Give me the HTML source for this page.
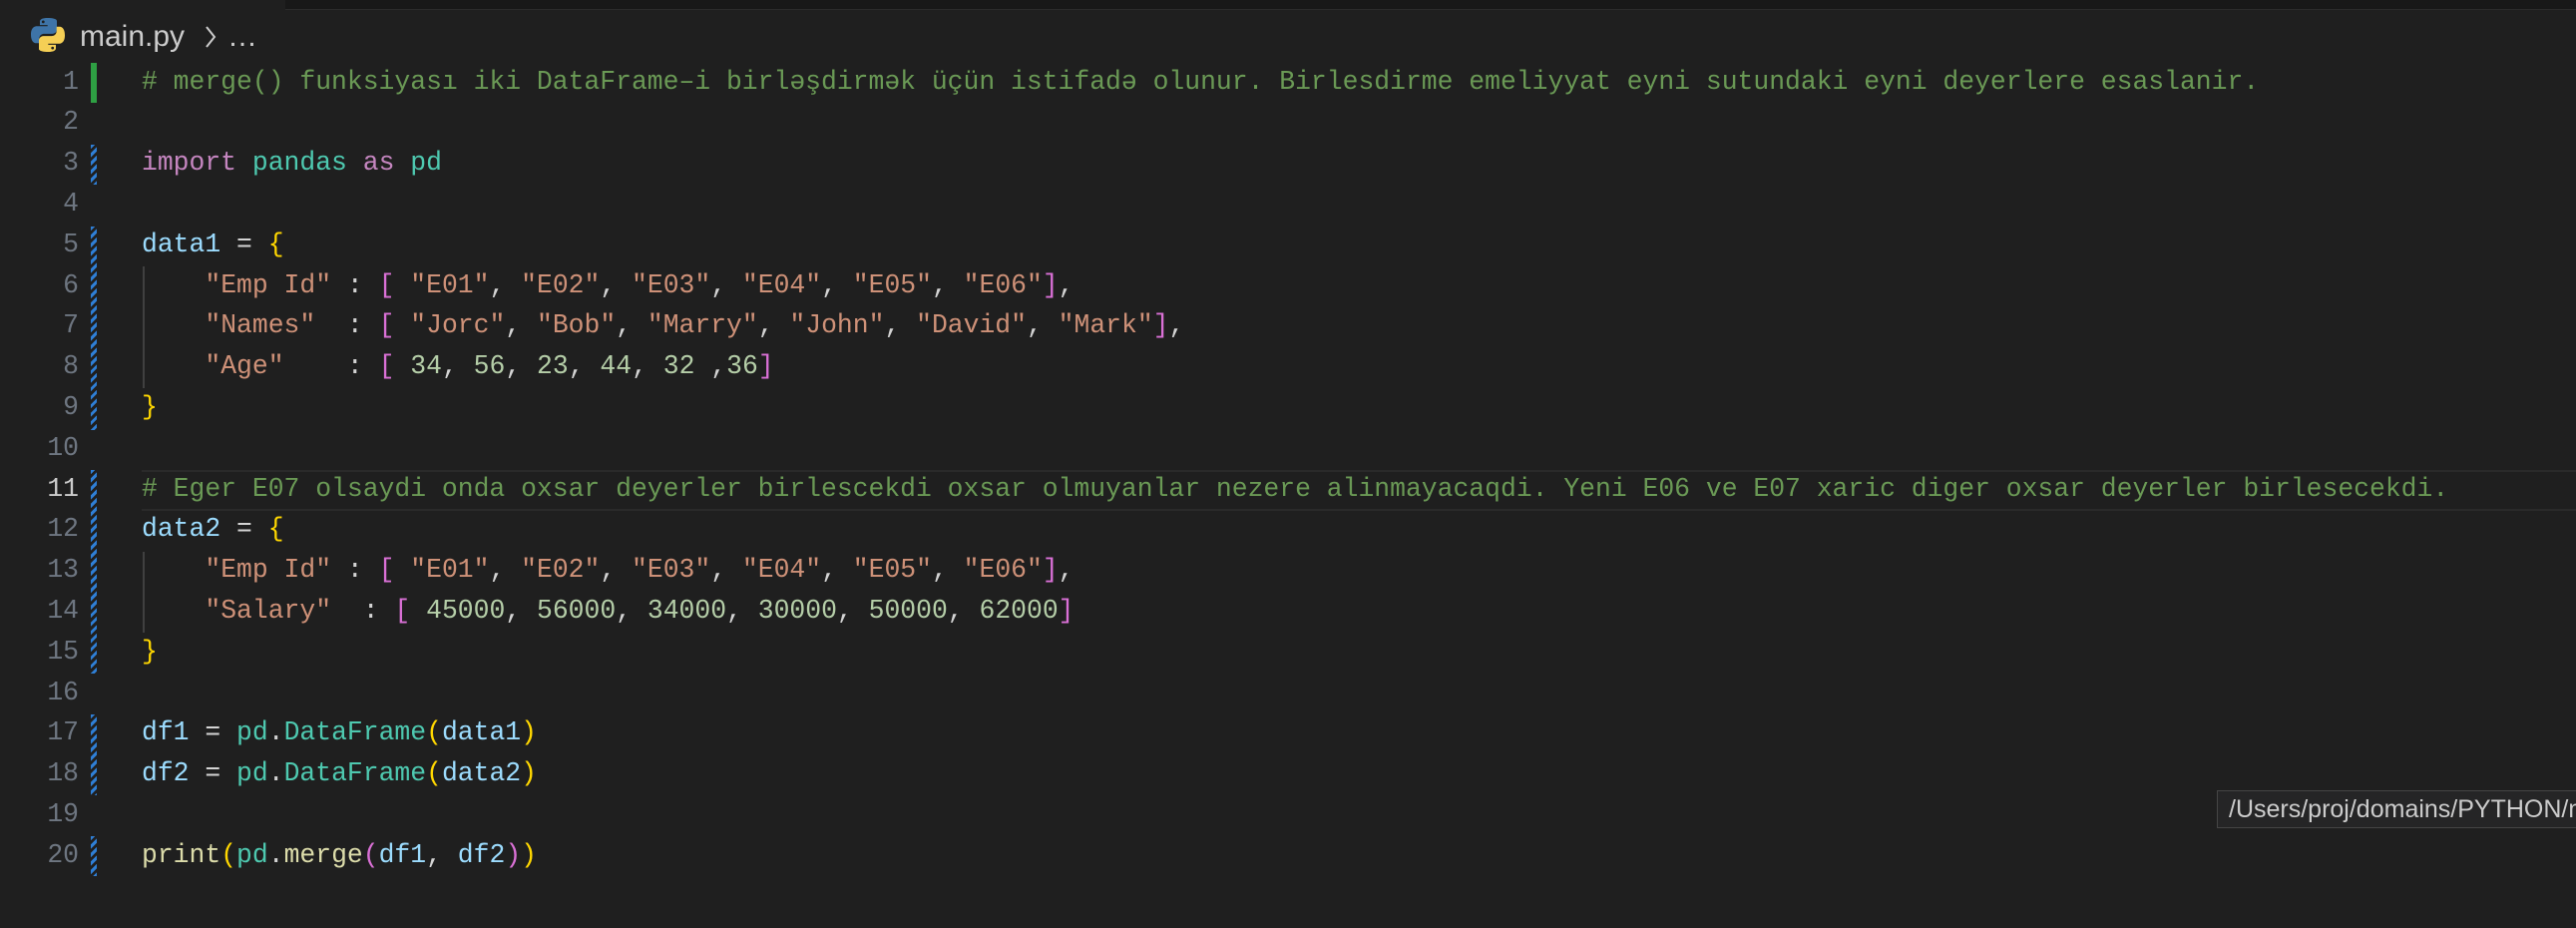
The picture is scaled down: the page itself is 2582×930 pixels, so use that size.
<!DOCTYPE html>
<html><head><meta charset="utf-8"><style>
html,body{margin:0;padding:0;width:2582px;height:930px;background:#1f1f1f;overflow:hidden}
.top{position:absolute;left:286px;top:0;width:2296px;height:9px;background:#181818;border-bottom:1px solid #2b2b2b}
.bc{position:absolute;left:80px;top:16px;font:30px "Liberation Sans",sans-serif;color:#cccccc;line-height:42px}
.ln{position:absolute;left:0;width:79px;text-align:right;font:26.4px "Liberation Mono",monospace;color:#6e7681;line-height:40.8px;height:40.8px}
.cl{position:absolute;left:142px;font:26.4px "Liberation Mono",monospace;color:#d4d4d4;line-height:40.8px;white-space:pre;height:40.8px}
.g{position:absolute;left:91px;width:6px}
.gb{background:repeating-linear-gradient(135deg,#2f7fd6 0 3px,#1f1f1f 3px 6px)}
.ig{position:absolute;left:143px;width:2px;background:#404040}
.c{color:#6a9955}.k{color:#c586c0}.t{color:#4ec9b0}.v{color:#9cdcfe}.s{color:#ce9178}.n{color:#b5cea8}.y{color:#ffd700}.p{color:#da70d6}.f{color:#dcdcaa}
.tip{position:absolute;left:2222px;top:792px;width:370px;height:38px;background:#252526;border:1px solid #454545;box-sizing:border-box;font:25px "Liberation Sans",sans-serif;color:#cccccc;line-height:36px;padding-left:11px;white-space:nowrap}
</style></head><body>
<div class="top"></div>
<svg style="position:absolute;left:30px;top:17px" width="36" height="36" viewBox="0 0 36 36">
<path d="M17.6 1c-8 0-7.6 3.5-7.6 3.5v3.6h7.7v1.1H7C7 9.2 1 8.6 1 17.6s5.2 8.7 5.2 8.7h3.1v-4.2s-.2-5.2 5.1-5.2h7.6s5 .1 5-4.8V4.1S27.7 1 17.6 1zm-4.3 2.5a1.4 1.4 0 110 2.8 1.4 1.4 0 010-2.8z" fill="#3e74a8"/>
<path d="M18.4 35c8 0 7.6-3.5 7.6-3.5v-3.6h-7.7v-1.1H29c0 0 6 .6 6-8.4s-5.2-8.7-5.2-8.7h-3.1v4.2s.2 5.2-5.1 5.2H14s-5-.1-5 4.8v8S8.3 35 18.4 35zm4.3-2.5a1.4 1.4 0 110-2.8 1.4 1.4 0 010 2.8z" fill="#f5cf55"/>
</svg>
<div class="bc">main.py</div>
<svg style="position:absolute;left:204px;top:24px" width="14" height="26" viewBox="0 0 14 26"><path d="M3 3l8 10-8 10" stroke="#cccccc" stroke-width="2" fill="none"/></svg>
<div class="bc" style="left:228px">…</div>

<div class="g" style="top:63px;height:40px;background:#2ea043"></div>
<div class="g gb" style="top:145px;height:40px"></div>
<div class="g gb" style="top:227px;height:204px"></div>
<div class="g gb" style="top:471px;height:204px"></div>
<div class="g gb" style="top:716px;height:81px"></div>
<div class="g gb" style="top:838px;height:40px"></div>
<div class="ig" style="top:267px;height:122px"></div>
<div class="ig" style="top:553px;height:81px"></div>
<div style="position:absolute;left:142px;top:471px;width:2440px;height:37px;border-top:2px solid #2a2a2a;border-bottom:2px solid #2a2a2a"></div>

<div class="ln" style="top:61.6px">1</div>
<div class="ln" style="top:102.4px">2</div>
<div class="ln" style="top:143.2px">3</div>
<div class="ln" style="top:184px">4</div>
<div class="ln" style="top:224.8px">5</div>
<div class="ln" style="top:265.6px">6</div>
<div class="ln" style="top:306.4px">7</div>
<div class="ln" style="top:347.2px">8</div>
<div class="ln" style="top:388px">9</div>
<div class="ln" style="top:428.8px">10</div>
<div class="ln" style="top:469.6px;color:#cccccc">11</div>
<div class="ln" style="top:510.4px">12</div>
<div class="ln" style="top:551.2px">13</div>
<div class="ln" style="top:592px">14</div>
<div class="ln" style="top:632.8px">15</div>
<div class="ln" style="top:673.6px">16</div>
<div class="ln" style="top:714.4px">17</div>
<div class="ln" style="top:755.2px">18</div>
<div class="ln" style="top:796px">19</div>
<div class="ln" style="top:836.8px">20</div>

<div class="cl c" style="top:61.6px"># merge() funksiyası iki DataFrame–i birləşdirmək üçün istifadə olunur. Birlesdirme emeliyyat eyni sutundaki eyni deyerlere esaslanir.</div>
<div class="cl" style="top:143.2px"><span class="k">import</span> <span class="t">pandas</span> <span class="k">as</span> <span class="t">pd</span></div>
<div class="cl" style="top:224.8px"><span class="v">data1</span> = <span class="y">{</span></div>
<div class="cl" style="top:265.6px">    <span class="s">"Emp Id"</span> : <span class="p">[</span> <span class="s">"E01"</span>, <span class="s">"E02"</span>, <span class="s">"E03"</span>, <span class="s">"E04"</span>, <span class="s">"E05"</span>, <span class="s">"E06"</span><span class="p">]</span>,</div>
<div class="cl" style="top:306.4px">    <span class="s">"Names"</span>  : <span class="p">[</span> <span class="s">"Jorc"</span>, <span class="s">"Bob"</span>, <span class="s">"Marry"</span>, <span class="s">"John"</span>, <span class="s">"David"</span>, <span class="s">"Mark"</span><span class="p">]</span>,</div>
<div class="cl" style="top:347.2px">    <span class="s">"Age"</span>    : <span class="p">[</span> <span class="n">34</span>, <span class="n">56</span>, <span class="n">23</span>, <span class="n">44</span>, <span class="n">32</span> ,<span class="n">36</span><span class="p">]</span></div>
<div class="cl" style="top:388px"><span class="y">}</span></div>
<div class="cl c" style="top:469.6px"># Eger E07 olsaydi onda oxsar deyerler birlescekdi oxsar olmuyanlar nezere alinmayacaqdi. Yeni E06 ve E07 xaric diger oxsar deyerler birlesecekdi.</div>
<div class="cl" style="top:510.4px"><span class="v">data2</span> = <span class="y">{</span></div>
<div class="cl" style="top:551.2px">    <span class="s">"Emp Id"</span> : <span class="p">[</span> <span class="s">"E01"</span>, <span class="s">"E02"</span>, <span class="s">"E03"</span>, <span class="s">"E04"</span>, <span class="s">"E05"</span>, <span class="s">"E06"</span><span class="p">]</span>,</div>
<div class="cl" style="top:592px">    <span class="s">"Salary"</span>  : <span class="p">[</span> <span class="n">45000</span>, <span class="n">56000</span>, <span class="n">34000</span>, <span class="n">30000</span>, <span class="n">50000</span>, <span class="n">62000</span><span class="p">]</span></div>
<div class="cl" style="top:632.8px"><span class="y">}</span></div>
<div class="cl" style="top:714.4px"><span class="v">df1</span> = <span class="t">pd</span>.<span class="t">DataFrame</span><span class="y">(</span><span class="v">data1</span><span class="y">)</span></div>
<div class="cl" style="top:755.2px"><span class="v">df2</span> = <span class="t">pd</span>.<span class="t">DataFrame</span><span class="y">(</span><span class="v">data2</span><span class="y">)</span></div>
<div class="cl" style="top:836.8px"><span class="f">print</span><span class="y">(</span><span class="t">pd</span>.<span class="f">merge</span><span class="p">(</span><span class="v">df1</span>, <span class="v">df2</span><span class="p">)</span><span class="y">)</span></div>

<div class="tip">/Users/proj/domains/PYTHON/main.py</div>
</body></html>
